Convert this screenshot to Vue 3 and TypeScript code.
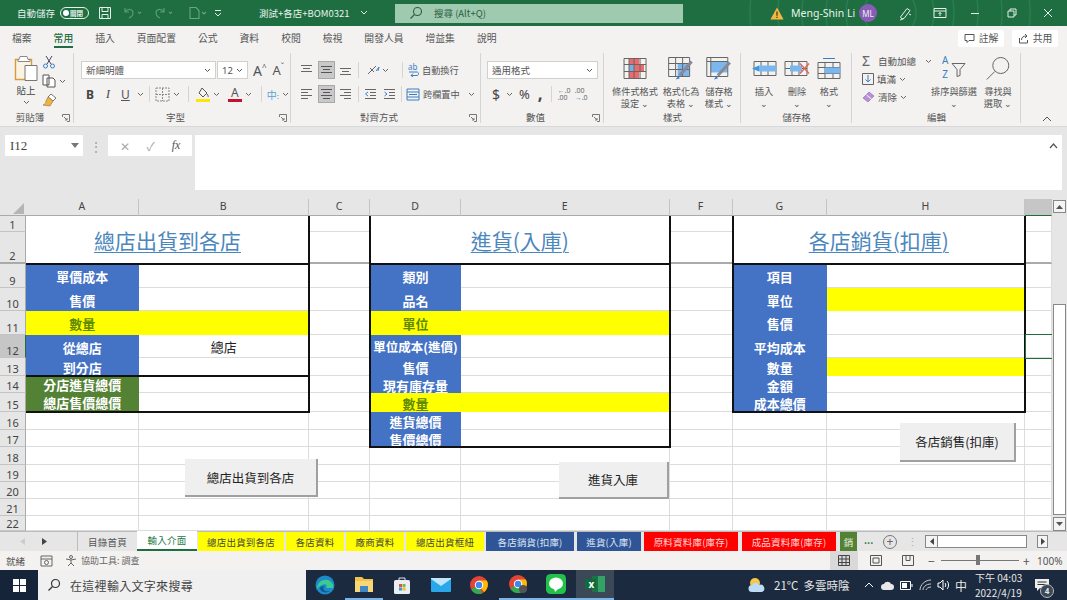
<template>
  <div class="app">
    <!-- 標題列 -->
    <header class="titlebar">
      <svg class="title-pattern" width="340" height="26" viewBox="0 0 340 26" fill="none" stroke="#2a7d50" stroke-width="1.5">
        <circle cx="170" cy="13" r="26" /><circle cx="170" cy="13" r="44" /><circle cx="170" cy="13" r="64" />
        <circle cx="170" cy="13" r="88" /><circle cx="170" cy="13" r="112" /><circle cx="170" cy="13" r="140" />
      </svg>
      <span class="autosave">自動儲存</span>
      <span class="toggle"><i></i>關閉</span>
      <svg class="qa-save" width="14" height="14" viewBox="0 0 14 14" fill="none" stroke="#e4f0e9"><path d="M1.5 1.5h11v11h-11zM4 1.5v4h6v-4M4 12.5v-4h6v4" /></svg>
      <svg class="qa-undo" width="30" height="14" viewBox="0 0 30 14" fill="none" stroke="#5c9a79" stroke-width="1.2"><path d="M3 2v4h4M3 6c3-4 8-3 8 1 0 2-2 4-4 5M16 6l1.5 1.5L19 6" /></svg>
      <svg class="qa-redo" width="30" height="14" viewBox="0 0 30 14" fill="none" stroke="#5c9a79" stroke-width="1.2"><path d="M11 2v4H7M11 6C8 2 3 3 3 7c0 2 2 4 4 5M16 6l1.5 1.5L19 6" /></svg>
      <svg class="qa-doc" width="24" height="14" viewBox="0 0 24 14" fill="none" stroke="#6aa586"><path d="M2 1.5h6l3 3v8H2zM14 6l2 2 2-2" stroke-width="1.1" /></svg>
      <svg class="qa-menu" width="8" height="8" viewBox="0 0 8 8" fill="none" stroke="#e4f0e9"><path d="M1 1.5h6M1 4l3 3 3-3" /></svg>
      <span class="doc-name">測試+各店+BOM0321</span>
      <svg class="doc-chev" width="8" height="6" viewBox="0 0 8 6" fill="none" stroke="#e4f0e9"><path d="M1 1l3 3 3-3" /></svg>
      <div class="searchbox">
        <svg width="14" height="14" viewBox="0 0 14 14" fill="none" stroke="#2c5f43" stroke-width="1.1"><circle cx="8.5" cy="5.5" r="4" /><path d="M5.5 8.5L1.5 12.5" /></svg>
        <span>搜尋 (Alt+Q)</span>
      </div>
      <svg class="warn" width="14" height="13" viewBox="0 0 14 13"><path d="M7 .5L13.6 12.5H.4z" fill="#f4b740" /><path d="M7 4.5v4.2M7 9.8v1.2" stroke="#40330c" stroke-width="1.2" /></svg>
      <span class="user">Meng-Shin Li</span>
      <span class="avatar">ML</span>
      <svg class="pen" width="15" height="15" viewBox="0 0 15 15" fill="none" stroke="#e4f0e9"><path d="M4 13L2.5 11 9 2.5l3 2-6 8zM2 14c2-.5 3-1 4-2M11 8l2 1" /></svg>
      <svg class="rib-disp" width="14" height="12" viewBox="0 0 14 12" fill="none" stroke="#e4f0e9"><path d="M1 1.5h12v9H1zM1 4h12M7 9V5.5M5.5 7L7 5.5 8.5 7" /></svg>
      <svg class="win-min" width="10" height="10" viewBox="0 0 10 10" stroke="#e4f0e9"><path d="M1 5.5h8" /></svg>
      <svg class="win-max" width="10" height="10" viewBox="0 0 10 10" fill="none" stroke="#e4f0e9"><path d="M1 3h6v6H1zM3 3V1h6v6H7" /></svg>
      <svg class="win-close" width="10" height="10" viewBox="0 0 10 10" stroke="#e4f0e9"><path d="M1 1l8 8M9 1l-8 8" /></svg>
    </header>

    <!-- 功能區索引標籤 -->
    <nav class="tabs">
      <span v-for="t in ribbonTabs" :key="t" class="tab" :class="{ active: t === '常用' }">{{ t }}</span>
      <span class="share-btn first">
        <svg width="11" height="11" viewBox="0 0 11 11" fill="none" stroke="#555"><path d="M1 1.5h9v6H5L3 9.5v-2H1z" /></svg>註解
      </span>
      <span class="share-btn">
        <svg width="11" height="11" viewBox="0 0 11 11" fill="none" stroke="#555"><path d="M1.5 5v5h8V7M3.500 7c0-3 2-4 5-4M7 1l2 2-2 2" /></svg>共用
      </span>
    </nav>

    <!-- 功能區 -->
    <section class="ribbon">
      <div class="group g-clip">
        <div class="body clip-body">
          <div class="paste">
            <svg width="24" height="27" viewBox="0 0 24 27" fill="none">
              <path d="M1.500 4.500h16v20h-16z" fill="#fbf3e4" stroke="#d99a3c" stroke-width="1.4" />
              <path d="M6 1.500h7l1 3h2v2H4v-2h1z" fill="#fff" stroke="#8a8a8a" />
              <path d="M11 10.500h12v15H11z" fill="#fff" stroke="#777" />
            </svg>
            <span>貼上</span>
            <svg class="chev" width="7" height="5" viewBox="0 0 7 5"><path d="M1 1l2.500 2.500L6 1" fill="none" stroke="#666" /></svg>
          </div>
          <div class="clip-small">
            <svg width="14" height="14" viewBox="0 0 14 14" fill="none" stroke="#446"><path d="M4 1l5 8M10 1L5 9" /><circle cx="3.500" cy="11" r="2" stroke="#3a7fc4" /><circle cx="10.500" cy="11" r="2" stroke="#3a7fc4" /></svg>
            <span class="copy-row">
              <svg width="14" height="14" viewBox="0 0 14 14" fill="none" stroke="#555"><path d="M1 1h6v10H1zM5 4h6l2 2v7H5z" fill="#fff" /></svg>
              <svg class="chev" width="7" height="5" viewBox="0 0 7 5"><path d="M1 1l2.500 2.500L6 1" fill="none" stroke="#666" /></svg>
            </span>
            <svg width="15" height="14" viewBox="0 0 15 14"><path d="M9 1l5 4-3 3-5-4z" fill="#fff" stroke="#777" /><path d="M6 4l5 4-3 5-7-1c2-1 3-2 3-4z" fill="#e9b44c" stroke="#a87a22" stroke-width=".7" /></svg>
          </div>
        </div>
        <div class="group-label">剪貼簿<svg class="launcher" width="8" height="8" viewBox="0 0 8 8" fill="none" stroke="#777"><path d="M.5 3V.5H7.500V7.500H5M2 3l3 3M5 4v2H3" /></svg></div>
      </div>

      <div class="group g-font">
        <div class="body stack">
          <div class="row">
            <span class="select font-sel">新細明體<svg width="7" height="5" viewBox="0 0 7 5"><path d="M1 1l2.500 2.500L6 1" fill="none" stroke="#555" /></svg></span>
            <span class="select size-sel">12<svg width="7" height="5" viewBox="0 0 7 5"><path d="M1 1l2.500 2.500L6 1" fill="none" stroke="#555" /></svg></span>
            <span class="grow-a">A<sup>^</sup></span>
            <span class="shrink-a">A<sup>ˇ</sup></span>
          </div>
          <div class="row font-tools">
            <b class="ft-b">B</b>
            <i class="ft-i">I</i>
            <u class="ft-u">U</u>
            <svg class="chev ft-c1" width="7" height="5" viewBox="0 0 7 5"><path d="M1 1l2.500 2.500L6 1" fill="none" stroke="#666" /></svg>
            <span class="sep ft-s1"></span>
            <svg class="ft-border" width="15" height="15" viewBox="0 0 15 15" fill="none" stroke="#888"><path d="M1 1h13v13H1zM7.500 1v13M1 7.500h13" stroke-dasharray="2 1" /></svg>
            <svg class="chev ft-c2" width="7" height="5" viewBox="0 0 7 5"><path d="M1 1l2.500 2.500L6 1" fill="none" stroke="#666" /></svg>
            <span class="sep ft-s2"></span>
            <svg class="ft-fill" width="14" height="15" viewBox="0 0 14 15"><path d="M6 1l5 5-4 4-4-4z" fill="none" stroke="#555" /><path d="M11 7c1 1.500 1.500 2 1 3" stroke="#555" fill="none" /><rect x="0" y="12" width="14" height="3" fill="#ffe600" /></svg>
            <svg class="chev ft-c3" width="7" height="5" viewBox="0 0 7 5"><path d="M1 1l2.500 2.500L6 1" fill="none" stroke="#666" /></svg>
            <span class="ft-color">A</span>
            <svg class="chev ft-c4" width="7" height="5" viewBox="0 0 7 5"><path d="M1 1l2.500 2.500L6 1" fill="none" stroke="#666" /></svg>
            <span class="sep ft-s3"></span>
            <span class="ft-phon">中<small>:</small></span>
            <svg class="chev ft-c5" width="7" height="5" viewBox="0 0 7 5"><path d="M1 1l2.500 2.500L6 1" fill="none" stroke="#666" /></svg>
          </div>
        </div>
        <div class="group-label">字型<svg class="launcher" width="8" height="8" viewBox="0 0 8 8" fill="none" stroke="#777"><path d="M.5 3V.5H7.500V7.500H5M2 3l3 3M5 4v2H3" /></svg></div>
      </div>

      <div class="group g-align">
        <div class="body stack">
          <div class="row">
            <svg class="al al1" width="13" height="12" viewBox="0 0 13 12" stroke="#666"><path d="M1 1.500h11M3 4.500h7M1 7.500h11" /></svg>
            <span class="al-on al2"><svg width="13" height="12" viewBox="0 0 13 12" stroke="#555"><path d="M1 2.500h11M3 5.500h7M1 8.500h11" /></svg></span>
            <svg class="al al3" width="13" height="12" viewBox="0 0 13 12" stroke="#666"><path d="M1 4.500h11M3 7.500h7M1 10.500h11" /></svg>
            <span class="sep al-s1"></span>
            <svg class="al-orient" width="13" height="13" viewBox="0 0 13 13" fill="none" stroke="#666"><path d="M1 10L9 2M3 4l4 4" /><path d="M9 7l3-4-1 4" stroke="#3a7fc4" /></svg>
            <svg class="chev al-c1" width="7" height="5" viewBox="0 0 7 5"><path d="M1 1l2.500 2.500L6 1" fill="none" stroke="#666" /></svg>
            <span class="sep al-s2"></span>
            <span class="ab-icon">ab<svg width="12" height="6" viewBox="0 0 12 6" fill="none" stroke="#3a7fc4"><path d="M1 1h8c2 0 2 3.500 0 3.500H3M5 2.500L3 4.500l2 1.500" /></svg></span>
            <span class="al-text">自動換行</span>
          </div>
          <div class="row">
            <svg class="al al1" width="13" height="12" viewBox="0 0 13 12" stroke="#666"><path d="M1 1.500h11M1 4.500h7M1 7.500h11M1 10.500h7" /></svg>
            <span class="al-on al2"><svg width="13" height="12" viewBox="0 0 13 12" stroke="#555"><path d="M1 1.500h11M3 4.500h7M1 7.500h11M3 10.500h7" /></svg></span>
            <svg class="al al3" width="13" height="12" viewBox="0 0 13 12" stroke="#666"><path d="M1 1.500h11M5 4.500h7M1 7.500h11M5 10.500h7" /></svg>
            <span class="sep al-s1"></span>
            <svg class="al-ind1" width="13" height="12" viewBox="0 0 13 12" fill="none" stroke="#666"><path d="M1 1.500h11M6 4.500h6M6 7.500h6M1 10.500h11" /><path d="M4 4L1.500 6 4 8" stroke="#3a7fc4" /></svg>
            <svg class="al-ind2" width="13" height="12" viewBox="0 0 13 12" fill="none" stroke="#666"><path d="M1 1.500h11M6 4.500h6M6 7.500h6M1 10.500h11" /><path d="M1.500 4L4 6 1.500 8" stroke="#3a7fc4" /></svg>
            <span class="sep al-s3"></span>
            <svg class="al-merge" width="14" height="13" viewBox="0 0 14 13" fill="none" stroke="#3a7fc4"><path d="M1 1h12v11H1zM1 4h12M1 9h12M3 6.500h8" /></svg>
            <span class="al-text m">跨欄置中</span>
            <svg class="chev al-c2" width="7" height="5" viewBox="0 0 7 5"><path d="M1 1l2.500 2.500L6 1" fill="none" stroke="#666" /></svg>
          </div>
        </div>
        <div class="group-label">對齊方式<svg class="launcher" width="8" height="8" viewBox="0 0 8 8" fill="none" stroke="#777"><path d="M.5 3V.5H7.500V7.500H5M2 3l3 3M5 4v2H3" /></svg></div>
      </div>

      <div class="group g-number">
        <div class="body stack">
          <div class="row">
            <span class="select num-sel">通用格式<svg width="7" height="5" viewBox="0 0 7 5"><path d="M1 1l2.500 2.500L6 1" fill="none" stroke="#555" /></svg></span>
          </div>
          <div class="row num-tools">
            <span class="nt-dollar">$</span>
            <svg class="chev nt-c" width="7" height="5" viewBox="0 0 7 5"><path d="M1 1l2.500 2.500L6 1" fill="none" stroke="#666" /></svg>
            <span class="nt-pct">%</span>
            <span class="nt-comma">,</span>
            <span class="sep nt-s"></span>
            <span class="nt-dec d1"><em>←</em>.0<br />.00</span>
            <span class="nt-dec d2">.00<br /><em>→</em>.0</span>
          </div>
        </div>
        <div class="group-label">數值<svg class="launcher" width="8" height="8" viewBox="0 0 8 8" fill="none" stroke="#777"><path d="M.5 3V.5H7.500V7.500H5M2 3l3 3M5 4v2H3" /></svg></div>
      </div>

      <div class="group g-styles">
        <div class="body big-row">
          <div class="big s1">
            <svg width="24" height="22" viewBox="0 0 24 22"><rect x="6" y="1" width="10" height="6" fill="#ee6a6a" /><rect x="11" y="7" width="10" height="7" fill="#ee6a6a" /><rect x="6" y="14" width="10" height="7" fill="#ee6a6a" /><rect x="6" y="7" width="5" height="7" fill="#7aaee0" /><path d="M1 1h22v20H1zM1 7h22M1 14h22M6 1v20M11 1v20M17 1v20" fill="none" stroke="#666" /></svg>
            <span>條件式格式<br />設定 <i class="car">⌄</i></span>
          </div>
          <div class="big s2">
            <svg width="26" height="24" viewBox="0 0 26 24"><rect x="10" y="7" width="12" height="13" fill="#7ab7ee" /><path d="M1 1h21v19H1zM1 7h21M1 13h21M8 1v19M15 1v19" fill="none" stroke="#666" /><path d="M24 5L12 19" stroke="#889" stroke-width="3" /><path d="M11 19l-3 4 4-1z" fill="#3a7fc4" /></svg>
            <span>格式化為<br />表格 <i class="car">⌄</i></span>
          </div>
          <div class="big s3">
            <svg width="26" height="24" viewBox="0 0 26 24"><rect x="5" y="5" width="17" height="11" fill="#7ab7ee" /><path d="M1 1h21v19H1zM1 5h21M5 1v19" fill="none" stroke="#666" /><path d="M24 6L12 19" stroke="#889" stroke-width="3" /><path d="M11 19l-3 4 4-1z" fill="#3a7fc4" /></svg>
            <span>儲存格<br />樣式 <i class="car">⌄</i></span>
          </div>
        </div>
        <div class="group-label">樣式</div>
      </div>

      <div class="group g-cells">
        <div class="body big-row">
          <div class="big c1">
            <svg width="26" height="22" viewBox="0 0 26 22"><path d="M3 4h22v14H3zM3 11h22M10 4v14M17 4v14" fill="none" stroke="#666" /><rect x="8" y="8" width="17" height="6" fill="#7ab7ee" /><path d="M8 8L1 11l7 3z" fill="#3a9ae0" /></svg>
            <span>插入<br /><i class="car">⌄</i></span>
          </div>
          <div class="big c2">
            <svg width="26" height="22" viewBox="0 0 26 22"><path d="M1 4h22v14H1zM1 11h22M8 4v14M15 4v14" fill="none" stroke="#666" /><rect x="6" y="8" width="12" height="6" fill="#7ab7ee" /><path d="M16 6l9 10M25 6l-9 10" stroke="#e0665a" stroke-width="1.400" /></svg>
            <span>刪除<br /><i class="car">⌄</i></span>
          </div>
          <div class="big c3">
            <svg width="24" height="24" viewBox="0 0 24 24"><path d="M1 6h22v16H1zM1 11h22M1 17h22M8 6v16M16 6v16" fill="none" stroke="#666" /><rect x="8" y="11" width="15" height="6" fill="#7ab7ee" /><path d="M6 2h12" stroke="#3a7fc4" /></svg>
            <span>格式<br /><i class="car">⌄</i></span>
          </div>
        </div>
        <div class="group-label">儲存格</div>
      </div>

      <div class="group g-edit">
        <div class="body edit-body">
          <div class="edit-list">
            <span><b class="sigma">Σ</b>自動加總<svg class="chev e1" width="7" height="5" viewBox="0 0 7 5"><path d="M1 1l2.500 2.500L6 1" fill="none" stroke="#666" /></svg></span>
            <span><svg width="12" height="12" viewBox="0 0 12 12" fill="none" stroke="#3a7fc4"><path d="M.5.500h11v11H.500z" stroke="#666" /><path d="M6 2v7M3.500 6.500L6 9l2.500-2.500" /></svg>填滿<svg class="chev" width="7" height="5" viewBox="0 0 7 5"><path d="M1 1l2.500 2.500L6 1" fill="none" stroke="#666" /></svg></span>
            <span><svg width="13" height="12" viewBox="0 0 13 12"><path d="M7 1l5 4-6 6-5-4z" fill="#b98fd6" stroke="#8a63a8" stroke-width=".6" /><path d="M4.500 4l5 4" stroke="#fff" /></svg>清除<svg class="chev" width="7" height="5" viewBox="0 0 7 5"><path d="M1 1l2.500 2.500L6 1" fill="none" stroke="#666" /></svg></span>
          </div>
          <div class="big e-sort">
            <svg width="24" height="22" viewBox="0 0 24 22" fill="none"><path d="M10 6h13l-5 6v6l-3 1v-7z" stroke="#666" /></svg>
            <b class="az">A<br />Z</b>
            <span>排序與篩選<br /><i class="car">⌄</i></span>
          </div>
          <div class="big e-find">
            <svg width="26" height="24" viewBox="0 0 26 24" fill="none" stroke="#666"><circle cx="16" cy="9" r="8" /><path d="M10 15L2 23" /></svg>
            <span>尋找與<br />選取 <i class="car">⌄</i></span>
          </div>
        </div>
        <div class="group-label">編輯</div>
      </div>
      <svg class="collapse" width="10" height="6" viewBox="0 0 10 6" fill="none" stroke="#555"><path d="M1 5l4-4 4 4" /></svg>
    </section>

    <!-- 資料編輯列 -->
    <section class="formula">
      <div class="name-box">I12<svg width="8" height="5" viewBox="0 0 8 5"><path d="M0 0h8L4 5z" fill="#777" /></svg></div>
      <span class="dots">⋮</span>
      <div class="fx-box">
        <span class="x">✕</span><span class="x">✓</span><em>fx</em>
      </div>
      <div class="formula-input"><svg width="9" height="6" viewBox="0 0 9 6" fill="none" stroke="#555" stroke-width="1.200"><path d="M1 5l3.500-4L8 5" /></svg></div>
    </section>

    <!-- 工作表 -->
    <section class="sheet">
      <div class="grid">
        <div class="corner"><svg width="14" height="14" viewBox="0 0 14 14"><path d="M14 0v14H0z" fill="#b5b5b5" /></svg></div>
        <div v-for="c in colHeads" :key="c.col" class="col-head" :class="{ sel: c.name === '' }" :style="area({ col: c.col, row: 1 })">{{ c.name }}</div>
        <template v-for="(r, ri) in rowNames" :key="r">
          <div class="row-head" :class="{ sel: r === 12, tall: r === 2 }" :style="area({ col: 1, row: ri + 2 })">{{ r }}</div>
          <div v-for="c in colHeads" :key="c.col" class="cell" :class="{ tall: r === 2 }" :style="area({ col: c.col, row: ri + 2 })"></div>
        </template>
        <div v-for="f in fills" :key="f.col + '-' + f.row + f.kind" class="fill" :class="f.kind" :style="area(f)">{{ f.text }}</div>
        <div v-for="f in frames" :key="'f' + f.col + '-' + f.row" class="frame" :class="{ open: f.col === 2, head: f.row === 2 }" :style="area(f)"></div>
        <div class="active-cell" :style="area({ col: 10, row: 7 })"></div>
      </div>
      <button class="shape b1">總店出貨到各店</button>
      <button class="shape b2">進貨入庫</button>
      <button class="shape b3">各店銷售(扣庫)</button>
      <div class="vscroll">
        <span class="sb-btn"><svg width="7" height="4" viewBox="0 0 7 4"><path d="M0 4L3.500 0 7 4z" fill="#555" /></svg></span>
        <span class="sb-track"><i></i></span>
        <span class="sb-btn"><svg width="7" height="4" viewBox="0 0 7 4"><path d="M0 0L3.500 4 7 0z" fill="#555" /></svg></span>
      </div>
    </section>

    <!-- 工作表索引標籤 -->
    <section class="sheets">
      <div class="sheet-nav">
        <svg width="5" height="7" viewBox="0 0 5 7"><path d="M5 0v7L0 3.500z" fill="#ccc" /></svg>
        <svg width="5" height="7" viewBox="0 0 5 7"><path d="M0 0v7l5-3.500z" fill="#444" /></svg>
      </div>
      <span v-for="s in sheetTabs" :key="s.name" class="sheet-tab" :class="s.kind" :style="{ width: s.width + 'px' }">{{ s.name }}</span>
      <span class="more">...</span>
      <span class="add">+</span>
      <span class="dots2">⋮</span>
      <div class="hscroll">
        <span class="hs-btn"><svg width="4" height="7" viewBox="0 0 4 7"><path d="M4 0v7L0 3.500z" fill="#444" /></svg></span>
        <span class="hs-thumb"></span>
      </div>
      <span class="hs-btn right"><svg width="4" height="7" viewBox="0 0 4 7"><path d="M0 0v7l4-3.500z" fill="#444" /></svg></span>
    </section>

    <!-- 狀態列 -->
    <footer class="status">
      <span class="st-ready">就緒</span>
      <svg class="st-macro" width="13" height="12" viewBox="0 0 13 12" fill="none" stroke="#666"><path d="M1 1h11v10H1zM1 4h11" /><circle cx="6.500" cy="7.500" r="2" /></svg>
      <svg class="st-acc" width="13" height="13" viewBox="0 0 13 13" fill="none" stroke="#666"><circle cx="6" cy="3" r="1.500" /><path d="M1 5l5 1 5-1M6 6v3l-3 3M6 9l3 3" /></svg>
      <span class="st-help">協助工具: 調查</span>
      <span class="view on"><svg width="12" height="11" viewBox="0 0 12 11" fill="none" stroke="#444"><path d="M.5.500h11v10H.500zM.5 4h11M.5 7.500h11M4 .5v10M8 .5v10" /></svg></span>
      <span class="view"><svg width="12" height="11" viewBox="0 0 12 11" fill="none" stroke="#555"><path d="M.5.500h11v10H.500zM3 3h6v5H3z" /></svg></span>
      <span class="view"><svg width="12" height="11" viewBox="0 0 12 11" fill="none" stroke="#555"><path d="M.5.500h11v10H.500zM4 .5v5h4v-5" /></svg></span>
      <span class="zoom-minus">−</span>
      <span class="slider"><i></i></span>
      <span class="zoom-plus">+</span>
      <span class="zoom-val">100%</span>
    </footer>

    <!-- 工作列 -->
    <footer class="taskbar">
      <span class="start"><svg width="13" height="13" viewBox="0 0 13 13" fill="#fff"><path d="M0 0h6v6H0zM7 0h6v6H7zM0 7h6v6H0zM7 7h6v6H7z" /></svg></span>
      <div class="task-search">
        <svg width="14" height="14" viewBox="0 0 14 14" fill="none" stroke="#333" stroke-width="1.200"><circle cx="8.500" cy="5.500" r="4" /><path d="M5.500 8.500l-4 4" /></svg>
        在這裡輸入文字來搜尋
      </div>
      <span class="tk">
        <svg width="20" height="20" viewBox="0 0 20 20"><circle cx="10" cy="10" r="9.500" fill="#1c8ac9" /><path d="M2 14C2 6 10 3 15 6c3 2 4 5 3 7h-7c2-3-1-5-4-3-3 1-4 3-5 4z" fill="#3ccb8f" /><path d="M5 13c0 4 6 6 10 3-5 1-8-1-6-5-2 0-4 1-4 2z" fill="#0d5a96" /></svg>
      </span>
      <span class="tk under">
        <svg width="20" height="17" viewBox="0 0 20 17"><path d="M1 1h7l2 2h9v13H1z" fill="#f2c14e" /><rect x="1" y="5" width="18" height="11" fill="#f8d776" /><rect x="6" y="10" width="8" height="6" fill="#3f88c5" /></svg>
      </span>
      <span class="tk">
        <svg width="18" height="19" viewBox="0 0 18 19"><path d="M6 4V2h6v2" fill="none" stroke="#dfe6ee" /><rect x="1" y="4" width="16" height="14" rx="1.500" fill="#e8eef4" /><rect x="6" y="8" width="3" height="3" fill="#e8503a" /><rect x="9.500" y="8" width="3" height="3" fill="#7cbb3d" /><rect x="6" y="11.500" width="3" height="3" fill="#2b9be0" /><rect x="9.500" y="11.500" width="3" height="3" fill="#f4b82d" /></svg>
      </span>
      <span class="tk">
        <svg width="20" height="16" viewBox="0 0 20 16"><rect y="1" width="20" height="14" rx="1" fill="#28a8ea" /><path d="M0 2l10 7 10-7V1H0z" fill="#bfe6fb" /></svg>
      </span>
      <span class="tk">
        <svg width="18" height="18" viewBox="0 0 18 18"><circle cx="9" cy="9" r="9" fill="#e54335" /><path d="M9 9L1.200 13.500A9 9 0 0 0 9 18c1 0 2-.2 3-.6z" fill="#34a853" /><path d="M9 4.500h7.800A9 9 0 0 1 14 16L9 9z" fill="#fbbc05" /><circle cx="9" cy="9" r="4.200" fill="#fff" /><circle cx="9" cy="9" r="3.200" fill="#4285f4" /></svg>
      </span>
      <span class="tk under">
        <svg width="18" height="18" viewBox="0 0 18 18"><circle cx="9" cy="9" r="9" fill="#e54335" /><path d="M9 9L1.200 13.500A9 9 0 0 0 9 18c1 0 2-.2 3-.6z" fill="#34a853" /><path d="M9 4.500h7.800A9 9 0 0 1 14 16L9 9z" fill="#fbbc05" /><circle cx="9" cy="9" r="4.200" fill="#fff" /><circle cx="9" cy="9" r="3.200" fill="#4285f4" /><circle cx="14" cy="14" r="4" fill="#555" /></svg>
      </span>
      <span class="tk under">
        <svg width="20" height="20" viewBox="0 0 20 20"><rect width="20" height="20" rx="4.500" fill="#22c14a" /><ellipse cx="10" cy="9.500" rx="7" ry="6" fill="#fff" /><path d="M8 14l1 4 4-4z" fill="#fff" /></svg>
      </span>
      <span class="tk active">
        <svg width="20" height="18" viewBox="0 0 20 18"><rect x="7" y="1" width="13" height="16" fill="#1e7145" /><rect x="13" y="1" width="7" height="16" fill="#33a266" /><rect x="0" y="4" width="11" height="10" fill="#0f6b3a" /></svg>
        <b>x</b>
      </span>
      <div class="tray">
        <svg class="weather" width="18" height="16" viewBox="0 0 18 16"><circle cx="7" cy="6" r="5" fill="#f3c64e" /><path d="M4 15a3.500 3.500 0 0 1 0-7c1-2.500 6-3 7 0a3.500 3.500 0 0 1 3 7z" fill="#bcdcf5" /></svg>
        <span class="wtext">21°C&nbsp; 多雲時陰</span>
        <svg class="t-up" width="10" height="6" viewBox="0 0 10 6" fill="none" stroke="#fff"><path d="M1 5l4-4 4 4" /></svg>
        <svg class="t-cloud" width="13" height="9" viewBox="0 0 13 9"><path d="M3 9a3 3 0 0 1 0-6c1-3 6-3 7 0a3 3 0 0 1 0 6z" fill="#e8e8e8" /></svg>
        <svg class="t-bat" width="13" height="9" viewBox="0 0 13 9" fill="none" stroke="#fff"><path d="M.5.500h10v8H.500zM12 3v3" /><rect x="2" y="2" width="5" height="5" fill="#fff" stroke="none" /></svg>
        <svg class="t-wifi" width="13" height="12" viewBox="0 0 13 12" fill="none" stroke="#ccc"><path d="M1 11C1 6 6 1 12 1M4 11c0-3 3-6 8-6M7 11c0-1 2-3 5-3" /></svg>
        <svg class="t-vol" width="13" height="12" viewBox="0 0 13 12" fill="none" stroke="#fff"><path d="M1 4h2l3-3v10L3 8H1zM8 4c1 1 1 3 0 4M10 2c2 2 2 6 0 8" /></svg>
        <span class="ime">中</span>
        <span class="clock">下午 04:03<br />2022/4/19</span>
        <span class="notify">
          <svg width="16" height="14" viewBox="0 0 16 14"><path d="M1 1h14v9H6l-3 3v-3H1z" fill="#eee" /><path d="M3.500 4h9M3.500 6.500h9" stroke="#333" /></svg>
          <b>4</b>
        </span>
      </div>
    </footer>
  </div>
</template>

<script setup lang="ts">
interface Area {
  col: number
  row: number
  colSpan?: number
  rowSpan?: number
}
interface Fill extends Area {
  text: string
  kind: string
}

const ribbonTabs = ['檔案', '常用', '插入', '頁面配置', '公式', '資料', '校閱', '檢視', '開發人員', '增益集', '說明']
// I 欄是選取欄，欄名在截圖中看不到
const colHeads = ['A', 'B', 'C', 'D', 'E', 'F', 'G', 'H', ''].map((name, i) => ({ name, col: i + 2 }))
const rowNames = [1, 2, 9, 10, 11, 12, 13, 14, 15, 16, 17, 18, 19, 20, 21, 22]

// 欄 A=2 ... I=10，列 1=2, 2=3, 9=4, 10=5 ... 17=12
const fills: Fill[] = [
  { col: 2, row: 2, colSpan: 2, rowSpan: 2, text: '總店出貨到各店', kind: 'title' },
  { col: 2, row: 4, text: '單價成本', kind: 'blue' },
  { col: 2, row: 5, text: '售價', kind: 'blue' },
  { col: 2, row: 6, colSpan: 2, text: '', kind: 'yellow' },
  { col: 2, row: 6, text: '數量', kind: 'yellow label' },
  { col: 2, row: 7, text: '從總店', kind: 'blue' },
  { col: 3, row: 7, text: '總店', kind: 'plain' },
  { col: 2, row: 8, text: '到分店', kind: 'blue' },
  { col: 2, row: 9, text: '分店進貨總價', kind: 'green' },
  { col: 2, row: 10, text: '總店售價總價', kind: 'green' },

  { col: 5, row: 2, colSpan: 2, rowSpan: 2, text: '進貨(入庫)', kind: 'title' },
  { col: 5, row: 4, text: '類別', kind: 'blue' },
  { col: 5, row: 5, text: '品名', kind: 'blue' },
  { col: 5, row: 6, colSpan: 2, text: '', kind: 'yellow' },
  { col: 5, row: 6, text: '單位', kind: 'yellow label' },
  { col: 5, row: 7, text: '單位成本(進價)', kind: 'blue small' },
  { col: 5, row: 8, text: '售價', kind: 'blue' },
  { col: 5, row: 9, text: '現有庫存量', kind: 'blue' },
  { col: 5, row: 10, colSpan: 2, text: '', kind: 'yellow' },
  { col: 5, row: 10, text: '數量', kind: 'yellow label' },
  { col: 5, row: 11, text: '進貨總價', kind: 'blue' },
  { col: 5, row: 12, text: '售價總價', kind: 'blue' },

  { col: 8, row: 2, colSpan: 2, rowSpan: 2, text: '各店銷貨(扣庫)', kind: 'title' },
  { col: 8, row: 4, text: '項目', kind: 'blue' },
  { col: 8, row: 5, text: '單位', kind: 'blue' },
  { col: 9, row: 5, text: '', kind: 'yellow' },
  { col: 8, row: 6, text: '售價', kind: 'blue' },
  { col: 8, row: 7, text: '平均成本', kind: 'blue' },
  { col: 8, row: 8, text: '數量', kind: 'blue' },
  { col: 9, row: 8, text: '', kind: 'yellow' },
  { col: 8, row: 9, text: '金額', kind: 'blue' },
  { col: 8, row: 10, text: '成本總價', kind: 'blue' },
]

const frames: Area[] = [
  { col: 2, row: 2, colSpan: 2, rowSpan: 2 },
  { col: 2, row: 4, colSpan: 2, rowSpan: 5 },
  { col: 2, row: 9, colSpan: 2, rowSpan: 2 },
  { col: 5, row: 2, colSpan: 2, rowSpan: 2 },
  { col: 5, row: 4, colSpan: 2, rowSpan: 9 },
  { col: 8, row: 2, colSpan: 2, rowSpan: 2 },
  { col: 8, row: 4, colSpan: 2, rowSpan: 7 },
]

const sheetTabs = [
  { name: '目錄首頁', kind: 'plain', width: 59 },
  { name: '輸入介面', kind: 'current', width: 60 },
  { name: '總店出貨到各店', kind: 'yellow', width: 86 },
  { name: '各店資料', kind: 'yellow', width: 58 },
  { name: '廠商資料', kind: 'yellow', width: 58 },
  { name: '總店出貨框紐', kind: 'yellow', width: 78 },
  { name: '各店銷貨(扣庫)', kind: 'navy', width: 88 },
  { name: '進貨(入庫)', kind: 'navy', width: 64 },
  { name: '原料資料庫(庫存)', kind: 'red', width: 94 },
  { name: '成品資料庫(庫存)', kind: 'red', width: 94 },
  { name: '銷', kind: 'moss', width: 17 },
]

const area = (a: Area) => ({
  gridColumn: `${a.col} / span ${a.colSpan ?? 1}`,
  gridRow: `${a.row} / span ${a.rowSpan ?? 1}`,
})
</script>

<style>
body {
  margin: 0;
  overflow: hidden;
}
</style>

<style scoped>
.app {
  width: 1067px;
  height: 600px;
  overflow: hidden;
  display: flex;
  flex-direction: column;
  font-family: "Noto Sans CJK TC", "Noto Sans", sans-serif;
  font-size: 10px;
  color: #444;
  background: #f3f2f1;
}
svg { display: block; flex: none; }

/* title bar */
.titlebar {
  position: relative;
  height: 26px;
  flex: none;
  display: flex;
  align-items: center;
  background: #1e6e42;
  color: #e8f2ec;
  overflow: hidden;
}
.titlebar > * { flex: none; position: relative; }
.titlebar > .title-pattern { position: absolute; left: 720px; top: 0; }
.autosave { margin-left: 17px; width: 40px; font-size: 9.500px; }
.toggle {
  margin-left: 3px;
  width: 29px;
  height: 12px;
  box-sizing: border-box;
  border: 1px solid #e8f2ec;
  border-radius: 7px;
  display: flex;
  align-items: center;
  gap: 1px;
  padding-left: 2px;
  font-size: 6.500px;
  font-weight: 700;
  line-height: 1;
}
.toggle i { width: 6px; height: 6px; border-radius: 50%; background: #fff; flex: none; }
.qa-save { margin-left: 9px; }
.qa-undo { margin-left: 10px; }
.qa-redo { margin-left: 1px; }
.qa-doc { margin-left: 5px; }
.qa-menu { margin-left: 2px; }
.doc-name { margin-left: 37px; width: 98px; font-size: 9.500px; white-space: nowrap; }
.doc-chev { margin-left: 3px; }
.searchbox {
  margin-left: 27px;
  width: 288px;
  height: 19px;
  background: #9fcab0;
  display: flex;
  align-items: center;
  color: #2c5f43;
  padding-left: 14px;
  box-sizing: border-box;
  gap: 11px;
  font-size: 9.500px;
}
.warn { margin-left: 87px; }
.user { margin-left: 7px; width: 60px; font-family: "Noto Sans", sans-serif; font-size: 10.500px; white-space: nowrap; }
.avatar {
  margin-left: 8px;
  width: 18px;
  height: 18px;
  border-radius: 50%;
  background: #8a5cb8;
  display: flex;
  align-items: center;
  justify-content: center;
  font: 8px "Noto Sans", sans-serif;
}
.pen { margin-left: 21px; }
.rib-disp { margin-left: 20px; }
.win-min { margin-left: 23px; }
.win-max { margin-left: 27px; }
.win-close { margin-left: 26px; }

/* ribbon tabs */
.tabs {
  height: 24px;
  flex: none;
  display: flex;
  align-items: center;
  gap: 22px;
  padding-left: 12px;
  font-size: 9.800px;
  color: #555;
}
.tab { position: relative; white-space: nowrap; }
.tab.active { color: #1e6e42; font-weight: 500; }
.tab.active::after {
  content: "";
  position: absolute;
  left: 0;
  right: 0;
  bottom: -3px;
  height: 2px;
  background: #1e6e42;
}
.share-btn {
  width: 46px;
  height: 17px;
  background: #fff;
  border-radius: 2px;
  display: flex;
  align-items: center;
  justify-content: center;
  gap: 4px;
  color: #555;
}
.share-btn.first { margin-left: auto; }
.share-btn:last-child { margin-right: 9px; margin-left: -14px; }

/* ribbon */
.ribbon {
  height: 77px;
  flex: none;
  display: flex;
  position: relative;
  border-bottom: 1px solid #d8d8d8;
  box-sizing: border-box;
}
.group { display: flex; flex-direction: column; box-sizing: border-box; position: relative; flex: none; }
.group::after {
  content: "";
  position: absolute;
  right: 0;
  top: 3px;
  bottom: 3px;
  width: 1px;
  background: #d4d4d4;
}
.g-clip { width: 74px; }
.g-font { width: 217px; }
.g-align { width: 190px; }
.g-number { width: 123px; }
.g-styles { width: 137px; }
.g-cells { width: 111px; }
.g-edit { width: 169px; }
.body { height: 59px; flex: none; }
.group-label {
  height: 17px;
  text-align: center;
  line-height: 17px;
  font-size: 9.500px;
  color: #555;
  position: relative;
}
.g-clip .group-label, .g-font .group-label, .g-align .group-label, .g-number .group-label { padding-right: 14px; }
.launcher { position: absolute; right: 4px; top: 5px; }
.chev { flex: none; }
.sep { width: 1px; height: 16px; background: #d4d4d4; flex: none; }

/* clipboard */
.clip-body { display: flex; padding: 5px 0 0 14px; box-sizing: border-box; }
.paste { width: 24px; display: flex; flex-direction: column; align-items: center; font-size: 9.500px; line-height: 12px; }
.paste span { margin-top: 2px; }
.paste .chev { margin-top: 4px; }
.clip-small { margin-left: 3px; display: flex; flex-direction: column; gap: 5px; padding-left: 1px; }
.copy-row { display: flex; align-items: center; gap: 3px; }

/* font */
.stack { display: flex; flex-direction: column; padding-top: 11px; box-sizing: border-box; gap: 6px; }
.row { display: flex; align-items: center; height: 18px; position: relative; flex: none; }
.select {
  background: #fff;
  border: 1px solid #d0d0d0;
  box-sizing: border-box;
  height: 18px;
  display: flex;
  align-items: center;
  justify-content: space-between;
  padding: 0 4px;
  font-size: 9.500px;
  color: #555;
}
.font-sel { margin-left: 7px; width: 135px; }
.size-sel { margin-left: 1px; width: 31px; font-family: "Noto Sans", sans-serif; }
.grow-a, .shrink-a { font: 13px "Noto Sans", sans-serif; color: #555; }
.grow-a { margin-left: 5px; font-size: 14px; }
.shrink-a { margin-left: 6px; }
.grow-a sup, .shrink-a sup { font-size: 8px; line-height: 0; }
.font-tools > * { margin: 0; flex: none; }
.font-tools { font-family: "Noto Sans", sans-serif; font-size: 12px; color: #444; }
.font-tools .ft-b { margin-left: 12px; }
.font-tools .ft-i { margin-left: 12px; font-family: "Liberation Serif", serif; }
.font-tools .ft-u { margin-left: 11px; color: #555; }
.font-tools .ft-c1 { margin-left: 7px; }
.font-tools .ft-s1 { margin-left: 5px; }
.font-tools .ft-border { margin-left: 5px; }
.font-tools .ft-c2 { margin-left: 3px; }
.font-tools .ft-s2 { margin-left: 8px; }
.font-tools .ft-fill { margin-left: 7px; }
.font-tools .ft-c3 { margin-left: 3px; }
.font-tools .ft-color { margin-left: 8px; width: 14px; text-align: center; border-bottom: 3px solid #c8102e; line-height: 12px; font-size: 12px; color: #555; }
.font-tools .ft-c4 { margin-left: 3px; }
.font-tools .ft-s3 { margin-left: 9px; }
.font-tools .ft-phon { margin-left: 5px; color: #5aa0dc; font-size: 10px; font-family: "Noto Sans CJK TC", sans-serif; }
.ft-phon small { font-size: 8px; color: #4a8; }
.font-tools .ft-c5 { margin-left: 3px; }

/* alignment */
.g-align .row { padding-left: 9px; }
.al1 { flex: none; }
.al-on {
  margin-left: 5px;
  width: 17px;
  height: 18px;
  background: #c9c9c9;
  border: 1px solid #a8a8a8;
  box-sizing: border-box;
  display: flex;
  align-items: center;
  justify-content: center;
}
.al3 { margin-left: 4px; }
.al-s1 { margin-left: 6px; }
.al-orient { margin-left: 8px; }
.al-c1 { margin-left: 2px; }
.al-s2 { margin-left: 13px; }
.ab-icon { margin-left: 5px; width: 12px; font: 8px/8px "Noto Sans", sans-serif; color: #3a7fc4; }
.al-text { margin-left: 2px; font-size: 9.200px; white-space: nowrap; color: #555; }
.al-text.m { margin-left: 3px; }
.al-ind1 { margin-left: 5px; }
.al-ind2 { margin-left: 6px; }
.al-s3 { margin-left: 5px; }
.al-merge { margin-left: 4px; }
.al-c2 { margin-left: 8px; }

/* number */
.num-sel { margin-left: 6px; width: 111px; }
.num-tools { font-family: "Noto Sans", sans-serif; font-size: 14px; color: #444; }
.nt-dollar { margin-left: 11px; }
.nt-c { margin-left: 6px; }
.nt-pct { margin-left: 6px; font-size: 13px; }
.nt-comma { margin-left: 8px; font-size: 17px; font-weight: 700; line-height: 8px; }
.nt-s { margin-left: 8px; }
.nt-dec { font-size: 7px; line-height: 7px; color: #666; width: 14px; }
.nt-dec em { color: #3a7fc4; font-style: normal; }
.d1 { margin-left: 6px; }
.d2 { margin-left: 3px; }

/* big buttons */
.big-row { display: flex; position: relative; }
.big {
  display: flex;
  flex-direction: column;
  align-items: center;
  position: absolute;
  top: 6px;
  transform: translateX(-50%);
  white-space: nowrap;
  text-align: center;
  font-size: 9.200px;
  line-height: 12px;
  color: #555;
}
.big svg { height: 25px; }
.big span { margin-top: 4px; }
.car { font-style: normal; font-size: 9px; }
.s1 { left: 31px; }
.s2 { left: 77px; }
.s3 { left: 115px; }
.c1 { left: 23px; }
.c2 { left: 56px; }
.c3 { left: 88px; }

/* editing */
.edit-body { position: relative; }
.edit-list {
  padding: 5px 0 0 10px;
  display: flex;
  flex-direction: column;
  gap: 6px;
  font-size: 9.500px;
  line-height: 12px;
  color: #555;
}
.edit-list span { display: flex; align-items: center; gap: 3px; }
.sigma { font: 400 14px/12px "Noto Sans", sans-serif; color: #666; width: 12px; margin-right: 1px; }
.e1 { margin-left: 6px; }
.e-sort { left: 102px; }
.e-find { left: 146px; }
.az {
  position: absolute;
  left: 11px;
  top: -3px;
  font: 400 10px/14px "Noto Sans", sans-serif;
  color: #3a7fc4;
}
.collapse { position: absolute; right: 15px; bottom: 4px; }

/* formula bar */
.formula {
  height: 72px;
  flex: none;
  background: #e6e6e6;
  display: flex;
  align-items: flex-start;
  padding: 8px 0 0 5px;
  box-sizing: border-box;
}
.name-box {
  width: 78px;
  height: 21px;
  background: #fff;
  display: flex;
  align-items: center;
  justify-content: space-between;
  padding: 0 4px 0 5px;
  box-sizing: border-box;
  font: 13px "Liberation Serif", serif;
  color: #444;
}
.dots { width: 25px; text-align: center; color: #999; font-size: 12px; line-height: 21px; }
.fx-box {
  width: 84px;
  height: 21px;
  background: #fff;
  display: flex;
  align-items: center;
  justify-content: space-around;
  padding: 0 3px;
  box-sizing: border-box;
  color: #aaa;
  font-size: 12px;
}
.fx-box em { font: italic 12px "Liberation Serif", serif; color: #555; }
.formula-input {
  margin-left: 3px;
  width: 867px;
  height: 55px;
  background: #fff;
  display: flex;
  justify-content: flex-end;
  padding: 8px 4px 0 0;
  box-sizing: border-box;
}

/* sheet */
.sheet {
  height: 332px;
  flex: none;
  display: flex;
  position: relative;
  background: #fff;
  overflow: hidden;
}
.grid {
  width: 1052px;
  flex: none;
  display: grid;
  grid-template-columns: 26px 112.500px 170.500px 61px 91px 208.500px 63px 94.500px 198px 27px;
  grid-template-rows: 16.500px 16.500px 32px 24px 23px 24px 23px 18px 17px 19px 18px 17px 18px 17px 17px 17px 15px;
  overflow: hidden;
}
.corner {
  background: #e6e6e6;
  border-bottom: 1px solid #aaa;
  display: flex;
  align-items: flex-end;
  justify-content: flex-end;
  padding: 0 2px 1px 0;
  box-sizing: border-box;
}
.corner svg { width: 11px; height: 11px; }
.col-head {
  background: #e6e6e6;
  border-right: 1px solid #c4c4c4;
  border-bottom: 1px solid #aaa;
  box-sizing: border-box;
  text-align: center;
  font: 10.500px/15px "Noto Sans", sans-serif;
  color: #444;
  z-index: 3;
}
.col-head.sel { background: #c6c6c6; border-bottom: 1.500px solid #1e6e42; }
.row-head {
  background: #e6e6e6;
  border-bottom: 1px solid #c4c4c4;
  box-sizing: border-box;
  text-align: center;
  font: 11px/13px "Noto Sans", sans-serif;
  color: #444;
  display: flex;
  align-items: flex-end;
  justify-content: center;
  overflow: hidden;
  border-right: 1px solid #aaa;
}
.row-head.sel { background: #c6c6c6; border-right: 1.500px solid #1e6e42; }
.row-head.tall { border-bottom: 2px solid #aaa; }
.cell {
  border-right: 1px solid #dcdcdc;
  border-bottom: 1px solid #dcdcdc;
  box-sizing: border-box;
}
.cell.tall { border-bottom: 2px solid #aaa; }
.fill {
  display: flex;
  align-items: center;
  justify-content: center;
  white-space: nowrap;
  overflow: hidden;
  line-height: 1;
  font-size: 13px;
  z-index: 1;
}
.fill.title {
  background: #fff;
  color: #4b87bd;
  font-size: 21px;
  text-decoration: underline;
  text-decoration-thickness: 1px;
  text-underline-offset: 3px;
  font-weight: 400;
  padding-top: 1px;
}
.fill.blue { background: #4472c4; color: #fff; font-weight: 700; padding-top: 1px; }
.fill.blue.small { font-size: 12.500px; }
.fill.green { background: #548235; color: #fff; font-weight: 700; }
.fill.yellow { background: #ff0; }
.fill.yellow.label { background: none; color: #5f8a00; font-weight: 700; padding-top: 1px; }
.fill.plain { background: #fff; color: #222; border-bottom: 1px solid #dcdcdc; box-sizing: border-box; }
.frame {
  border: 2px solid #111;
  margin: -1px;
  z-index: 2;
  pointer-events: none;
}
.frame.open { border-left: none; margin-left: 0; }
.frame.head { border-top: none; margin-top: 0; }
.active-cell {
  border-top: 1.500px solid #1e6e42;
  border-bottom: 1.500px solid #1e6e42;
  border-left: 1.500px solid #1e6e42;
  margin: -1px 0;
  z-index: 2;
}
/* 浮動按鈕圖形 */
.shape {
  position: absolute;
  background: #efefef;
  border: none;
  border-right: 2px solid #a0a0a0;
  border-bottom: 2px solid #a0a0a0;
  box-sizing: border-box;
  padding: 0;
  font-family: inherit;
  font-size: 12.500px;
  color: #222;
  z-index: 3;
}
.b1 { left: 185px; top: 260px; width: 133px; height: 38px; }
.b2 { left: 559px; top: 263px; width: 110px; height: 37px; }
.b3 { left: 900px; top: 224px; width: 116px; height: 39px; }
.vscroll {
  width: 15px;
  flex: none;
  display: flex;
  flex-direction: column;
  background: #e6e6e6;
}
.sb-btn {
  height: 13px;
  flex: none;
  background: #f4f4f4;
  border: 1px solid #888;
  box-sizing: border-box;
  display: flex;
  align-items: center;
  justify-content: center;
  margin: 1px 1px 2px;
}
.sb-btn:last-child { margin: 2px 1px 0; height: 14px; }
.sb-track { flex: 1; position: relative; display: flex; flex-direction: column; padding-top: 89px; box-sizing: border-box; }
.sb-track i {
  flex: 1;
  background: #fff;
  border: 1px solid #888;
  margin: 0 1px;
}

/* sheet tabs */
.sheets {
  height: 19px;
  flex: none;
  background: #e6e6e6;
  display: flex;
  align-items: stretch;
  border-top: 1px solid #bbb;
  font-size: 9.500px;
}
.sheet-nav {
  width: 78px;
  flex: none;
  box-sizing: border-box;
  display: flex;
  align-items: center;
  gap: 17px;
  padding-left: 20px;
  border-right: 1px solid #bbb;
}
.sheet-tab {
  flex: none;
  box-sizing: border-box;
  margin-right: 2px;
  display: flex;
  align-items: center;
  justify-content: center;
  white-space: nowrap;
  overflow: hidden;
  letter-spacing: .2px;
}
.sheet-tab.plain { color: #555; margin-right: 0; }
.sheet-tab.current { background: #fff; color: #1e7a48; border-bottom: 2px solid #1e6e42; margin-top: -1px; margin-right: 1px; }
.sheet-tab.yellow { background: #ff0; color: #444; }
.sheet-tab.navy { background: #2f5597; color: #dbe5f5; margin-right: 3px; }
.sheet-tab.red { background: #f00; color: #ffd5d5; margin-right: 4px; }
.sheet-tab.moss { background: #548235; color: #e6efdd; }
.more { margin-left: 5px; width: 12px; color: #1e6e42; font-weight: 700; line-height: 16px; }
.add {
  margin-left: 7px;
  width: 12px;
  height: 12px;
  align-self: center;
  border: 1px solid #777;
  border-radius: 50%;
  text-align: center;
  font: 12px/11px "Noto Sans", sans-serif;
  color: #666;
}
.dots2 { margin-left: 10px; width: 10px; color: #aaa; font-size: 11px; line-height: 18px; }
.hscroll {
  margin-left: 8px;
  width: 102px;
  height: 13px;
  align-self: center;
  display: flex;
  flex: none;
  border: 1px solid #888;
  box-sizing: border-box;
  background: #e6e6e6;
}
.hs-btn {
  width: 11px;
  background: #f4f4f4;
  display: flex;
  align-items: center;
  justify-content: center;
  flex: none;
  border-right: 1px solid #888;
}
.hs-btn.right { height: 13px; align-self: center; margin-left: 10px; border: 1px solid #888; box-sizing: border-box; }
.hs-thumb { flex: 1; background: #fff; }

/* status bar */
.status {
  height: 19px;
  flex: none;
  display: flex;
  align-items: center;
  font-size: 9.500px;
  color: #555;
  background: #f3f2f1;
  position: relative;
}
.st-ready { margin-left: 6px; width: 20px; }
.st-macro { margin-left: 14px; }
.st-acc { margin-left: 12px; }
.st-help { margin-left: 3px; width: 70px; font-size: 9px; white-space: nowrap; color: #666; }
.view { width: 28px; height: 19px; display: flex; align-items: center; justify-content: center; margin-left: 4px; flex: none; }
.view.on { background: #d9d9d9; margin-left: 679px; }
.zoom-minus { margin-left: 6px; width: 10px; font-size: 12px; }
.slider { width: 78px; height: 1px; background: #777; position: relative; margin-left: 3px; }
.slider i { position: absolute; left: 35px; top: -5px; width: 4px; height: 10px; background: #777; }
.zoom-plus { margin-left: 4px; width: 10px; font-size: 12px; }
.zoom-val { margin-left: 4px; font: 10px "Noto Sans", sans-serif; }

/* taskbar */
.taskbar {
  flex: 1;
  background: #1b2a3f;
  display: flex;
  align-items: stretch;
  color: #fff;
}
.start { width: 38px; display: flex; align-items: center; justify-content: center; flex: none; background: #16243a; }
.task-search {
  width: 268px;
  flex: none;
  background: #f0f0f0;
  display: flex;
  align-items: center;
  gap: 9px;
  padding-left: 9px;
  box-sizing: border-box;
  color: #444;
  font-size: 12px;
  letter-spacing: .3px;
}
.tk {
  width: 38.500px;
  flex: none;
  display: flex;
  align-items: center;
  justify-content: center;
  box-sizing: border-box;
  position: relative;
}
.tk.under { border-bottom: 2px solid #7bb5e8; }
.tk.active { background: #3a4858; border-bottom: 2px solid #7bb5e8; }
.tk.active b { position: absolute; left: 13px; top: 7px; font: 700 10px "Noto Sans", sans-serif; color: #fff; }
.tray { flex: 1; display: flex; align-items: center; font-size: 11.500px; color: #e6e6e6; }
.weather { margin-left: 134px; }
.wtext { margin-left: 8px; white-space: nowrap; width: 76px; font-size: 11.500px; }
.t-up { margin-left: 14px; }
.t-cloud { margin-left: 7px; }
.t-bat { margin-left: 6px; }
.t-wifi { margin-left: 6px; }
.t-vol { margin-left: 5px; }
.ime { margin-left: 5px; font-size: 12px; }
.clock { margin-left: 8px; width: 46px; font: 10px/15px "Noto Sans CJK TC", sans-serif; white-space: nowrap; }
.notify { position: relative; margin-left: 13px; }
.notify b {
  position: absolute;
  right: -4px;
  bottom: -6px;
  width: 12px;
  height: 12px;
  border-radius: 50%;
  border: 1px solid #bbb;
  background: #3a4858;
  font: 700 8px/12px "Noto Sans", sans-serif;
  text-align: center;
}
</style>
